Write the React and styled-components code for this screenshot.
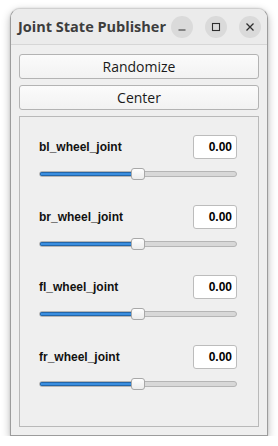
import React from "react";
import styled, { createGlobalStyle } from "styled-components";

const Global = createGlobalStyle`
  html, body { margin: 0; padding: 0; background: #ffffff; }
  body { font-family: "Open Sans", "DejaVu Sans", sans-serif; }
`;

const Window = styled.div`
  box-sizing: border-box;
  margin: 8px 0 0 10px;
  width: 258px;
  height: 428px;
  border: 1px solid #9c9c9c;
  border-top-color: #d0d0d0;
  border-radius: 10px 10px 0 0;
  background: #efefef;
  box-shadow: 0 3px 9px rgba(0, 0, 0, 0.28), 0 0 2px rgba(0, 0, 0, 0.12);
  display: flex;
  flex-direction: column;
  overflow: hidden;
`;

const TitleBar = styled.div`
  box-sizing: border-box;
  height: 36px;
  flex: none;
  display: flex;
  align-items: center;
  padding: 0 6px 0 7px;
  background: #ebebeb;
  border-bottom: 1px solid #d6d6d6;
`;

const Title = styled.div`
  flex: 1;
  font-family: "Open Sans", sans-serif;
  font-weight: 700;
  font-size: 14.5px;
  color: #3d3d3d;
  letter-spacing: 0;
  white-space: nowrap;
`;

const Controls = styled.div`
  display: flex;
  gap: 12px;
  align-items: center;
`;

const CtlButton = styled.div`
  width: 22px;
  height: 22px;
  border-radius: 50%;
  background: #dadada;
  display: flex;
  align-items: center;
  justify-content: center;
`;

const Body = styled.div`
  flex: 1;
  display: flex;
  flex-direction: column;
  gap: 6px;
  padding: 9px 8px 8px 8px;
  min-height: 0;
`;

const PushButton = styled.button`
  box-sizing: border-box;
  height: 25px;
  width: 100%;
  margin: 0;
  padding: 0;
  border: 1px solid #b3b3b3;
  border-radius: 3px;
  background: linear-gradient(#fbfbfb, #f2f2f2);
  font-family: "Open Sans", sans-serif;
  font-size: 14px;
  color: #1a1a1a;
  line-height: 23px;
`;

const Group = styled.div`
  box-sizing: border-box;
  flex: 1;
  border: 1px solid #b9b9b9;
  padding: 18px 21px 0 18px;
  display: flex;
  flex-direction: column;
  gap: 25px;
`;

const JointRow = styled.div`
  display: flex;
  flex-direction: column;
  gap: 9px;
`;

const LabelLine = styled.div`
  display: flex;
  align-items: center;
  justify-content: space-between;
  height: 24px;
`;

const Label = styled.div`
  font-family: "Liberation Sans", Arial, sans-serif;
  font-weight: 700;
  font-size: 12px;
  color: #111;
  padding-left: 1px;
`;

const ValueBox = styled.div`
  box-sizing: border-box;
  width: 44px;
  height: 24px;
  background: #fff;
  border: 1px solid #bcbcbc;
  border-radius: 3px;
  font-family: "Liberation Sans", Arial, sans-serif;
  font-weight: 700;
  font-size: 12px;
  color: #000;
  text-align: right;
  padding-right: 4px;
  line-height: 22px;
`;

const Slider = styled.div`
  position: relative;
  height: 12px;
  margin-left: 1px;
  display: flex;
  align-items: center;
`;

const Track = styled.div`
  box-sizing: border-box;
  width: 100%;
  height: 6px;
  border-radius: 3px;
  border: 1px solid #b5b5b5;
  background: #d8d8d8;
  overflow: hidden;
  display: flex;
`;

const Fill = styled.div`
  height: 100%;
  background: #3a8ee0;
  box-shadow: inset 0 0 0 1px #2466a8;
`;

const Handle = styled.div`
  position: absolute;
  top: 0;
  box-sizing: border-box;
  width: 14px;
  height: 12px;
  margin-left: -7px;
  border: 1px solid #a8a8a8;
  border-radius: 3px;
  background: linear-gradient(#fdfdfd, #ececec);
`;

const joints = ["bl_wheel_joint", "br_wheel_joint", "fl_wheel_joint", "fr_wheel_joint"];

function Joint({ name, ratio }) {
  return (
    <JointRow>
      <LabelLine>
        <Label>{name}</Label>
        <ValueBox>0.00</ValueBox>
      </LabelLine>
      <Slider>
        <Track>
          <Fill style={{ width: `${ratio * 100}%` }} />
        </Track>
        <Handle style={{ left: `${ratio * 100}%` }} />
      </Slider>
    </JointRow>
  );
}

export default function App() {
  return (
    <>
      <Global />
      <Window>
        <TitleBar>
          <Title>Joint State Publisher</Title>
          <Controls>
            <CtlButton>
              <svg width="10" height="10" viewBox="0 0 10 10">
                <line x1="1.5" y1="8" x2="8.5" y2="8" stroke="#2e2e2e" strokeWidth="1.2" />
              </svg>
            </CtlButton>
            <CtlButton>
              <svg width="10" height="10" viewBox="0 0 10 10">
                <rect x="1.5" y="1.5" width="7" height="7" fill="none" stroke="#2e2e2e" strokeWidth="1.1" />
              </svg>
            </CtlButton>
            <CtlButton>
              <svg width="10" height="10" viewBox="0 0 10 10">
                <path d="M1.5 1.5 L8.5 8.5 M8.5 1.5 L1.5 8.5" stroke="#2e2e2e" strokeWidth="1.3" />
              </svg>
            </CtlButton>
          </Controls>
        </TitleBar>
        <Body>
          <PushButton>Randomize</PushButton>
          <PushButton>Center</PushButton>
          <Group>
            {joints.map((j) => (
              <Joint key={j} name={j} ratio={0.5} />
            ))}
          </Group>
        </Body>
      </Window>
    </>
  );
}
